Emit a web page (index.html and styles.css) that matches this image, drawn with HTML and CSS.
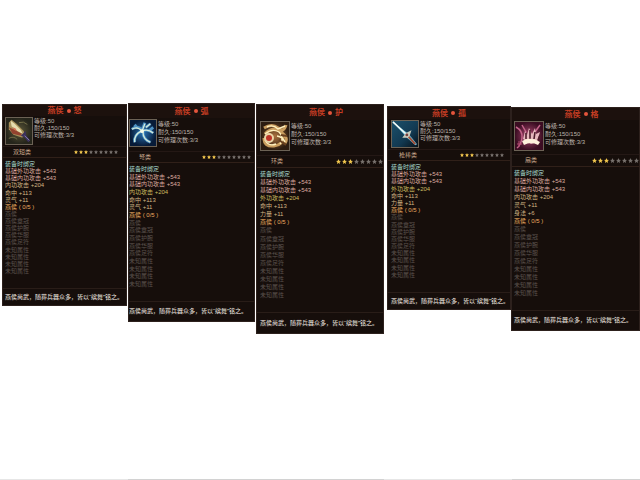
FILE: index.html
```
<!DOCTYPE html>
<html lang="zh-CN">
<head>
<meta charset="utf-8">
<meta name="viewport" content="width=device-width, initial-scale=1">
<title>燕侯武器</title>
<link rel="stylesheet" href="styles.css">
</head>
<body>
<main class="cards" id="cards"></main>
<footer class="base"><i></i><i></i><i></i><i></i><i></i></footer>

<svg width="0" height="0" class="defs" aria-hidden="true">
  <defs>
    <radialGradient id="gA"><stop offset="0" stop-color="#5d5839"/><stop offset="1" stop-color="#25251b"/></radialGradient>
    <radialGradient id="gB"><stop offset="0" stop-color="#2873b4"/><stop offset="1" stop-color="#071b38"/></radialGradient>
    <radialGradient id="gC"><stop offset="0" stop-color="#a9713e"/><stop offset="1" stop-color="#2c1c10"/></radialGradient>
    <linearGradient id="gD" x2="1" y2="1"><stop offset="0" stop-color="#1b506b"/><stop offset=".6" stop-color="#123951"/><stop offset="1" stop-color="#071018"/></linearGradient>
    <radialGradient id="gE"><stop offset="0" stop-color="#b04a74"/><stop offset="1" stop-color="#3b0d22"/></radialGradient>
  </defs>
  <symbol id="blade" viewBox="0 0 28 28">
    <rect width="28" height="28" fill="url(#gA)"/>
    <path d="M3 5 6 2l5 4 8 8 2 6-4 1-9-3-5-6z" fill="#a8925a"/>
    <path d="M5 3 9 6l7 7 2 4-6-3-6-5z" fill="#e6dcae"/>
    <path d="m3 10 5 2 9 5-1 2-9-2z" fill="#93432f"/>
    <path d="m7 10 3 1 2 3-3-1z" fill="#d66f55"/>
    <path d="m16 19 5-5 1 5 4 5-2 2-4-5z" fill="#3b315b"/>
    <path d="m20 19 5 5" stroke="#8b82b4"/>
    <path d="M3 22q5-3 9 1M14 5q5-2 9 2" stroke="#77714a" fill="none"/>
  </symbol>
  <symbol id="claw" viewBox="0 0 28 28">
    <rect width="28" height="28" fill="url(#gB)"/>
    <path d="M2 10q6-5 11 1l3-8M13 12q6-3 12 2M12 12q-8 4-7 12M14 13q0 8 8 11M17 8l5-4M8 9 5 5M20 12l5-4" fill="none" stroke="#4e93c4" stroke-width="3"/>
    <path d="M2 10q6-4 11 2l3-8M13 12q6-3 12 2M12 12q-8 4-7 12M14 13q0 8 8 11M17 8l5-4" fill="none" stroke="#d9edda" stroke-width="1.3"/>
    <circle cx="13" cy="12" r="2" fill="#f5fbe9"/>
  </symbol>
  <symbol id="ring" viewBox="0 0 28 28">
    <rect width="28" height="28" fill="url(#gC)"/>
    <path d="M3 6q8-5 14 0t8-3M4 12q8-8 16-2t4 11M3 16q0 9 10 8 9-1 9-9" fill="none" stroke="#c99d5e" stroke-width="3"/>
    <path d="M6 5q6-3 11 2l7-3M4 12q7-6 14-2 6 6 1 12M4 18q4 7 11 4M16 14q6 1 8 6" fill="none" stroke="#fff0bf" stroke-width="1.4"/>
    <circle cx="8" cy="16" r="5" fill="#ead4a5"/><circle cx="8" cy="16" r="3" fill="#bd3427"/>
    <path d="m18 18 7 5M20 13l6 1" stroke="#68401f" stroke-width="2"/>
  </symbol>
  <symbol id="sword" viewBox="0 0 28 28">
    <rect width="28" height="28" fill="url(#gD)"/>
    <path d="m1 1 17 13 9 11-2 1-10-9z" fill="#69b6d4"/>
    <path d="m1 1 14 13 2 3" fill="none" stroke="#f2fbf7" stroke-width="1.8"/>
    <path d="m11 18 4-5 6-3-2 6 1 4-4-2z" fill="#c7c9bb"/>
    <path d="m18 17 7 8" stroke="#a34e35" stroke-width="2"/>
    <circle cx="16" cy="15" r="1.5" fill="#773f3d"/>
  </symbol>
  <symbol id="fan" viewBox="0 0 28 28">
    <rect width="28" height="28" fill="url(#gE)"/>
    <path d="M1 5q7 4 6 11T2 26M7 3l4 7M25 3l-5 7" fill="none" stroke="#c4638a" stroke-width="1.5"/>
    <path d="m8 17 2-8 2 4 2-7 3 6 3-6 1 6 4-2-3 10-6 2z" fill="#e6b7be"/>
    <path d="m11 17v-6m4 6V8m4 9 1-7m3 8 2-5" stroke="#4b1c2b" stroke-width="1.6"/>
    <path d="M7 19q9-5 18 1l-2 3q-7-4-14 0z" fill="#fff0dc"/>
    <path d="M2 22h5M4 19v6" stroke="#b24a70"/>
  </symbol>
  <symbol id="star" viewBox="0 0 10 10"><path d="m5 0 1.4 3.4L10 3.8 7.3 6.2 8.1 10 5 8 1.9 10l.8-3.8L0 3.8l3.6-.4z"/></symbol>
</svg>
<script src="app.js"></script>
</body>
</html>
```
FILE: styles.css
```
* { box-sizing: border-box; }
body {
  margin: 0;
  min-height: 100vh;
  display: flex;
  flex-direction: column;
  background: #fff;
  font: 6px/7px "Liberation Sans", "Noto Sans CJK SC", sans-serif;
}
h2, p, ul { margin: 0; padding: 0; font: inherit; }
ul { list-style: none; }
.defs { position: absolute; }
.cards {
  flex: 1;
  display: grid;
  grid-template-columns: 127fr 128fr 129fr 127fr 129fr;
  align-items: start;
  padding-top: 103px;
}
.card {
  display: grid;
  min-width: 0;
  overflow: hidden;
  background: #160e0b;
  border: 1px solid #2d211d;
  white-space: nowrap;
}
.blade { margin: 1px 0 0 2px; grid-template-rows: 11px 30px 12px 130px 17px; }
.claw { margin: 0 0 0 1px; grid-template-rows: 14px 33px 12px 138px 20px; }
.ring { margin: 1px 0 0 1px; grid-template-rows: 15px 35px 13px 144px 21px; }
.sword { margin: 3px 0 0 3px; grid-template-rows: 12px 30px 12px 131px 17px; }
.fan { margin: 4px 0 0 0; grid-template-rows: 12px 34px 13px 143px 20px; }
.card > * { padding-left: 2px; }
.claw > * { padding-left: 0; }
.ring > *, .sword > * { padding-left: 3px; }
.card > .title {
  display: flex;
  align-items: center;
  justify-content: center;
  gap: 3px;
  padding: 0;
  background: #1c110d;
  color: #c83e24;
  font-size: 8px;
  font-weight: bold;
  line-height: 9px;
}
.ring > .title, .fan > .title { padding-left: 12px; }
.title i { width: 4px; height: 4px; border-radius: 50%; background: #e4553c; }
.head { display: flex; gap: 1px; padding-top: 1px; align-items: start; }
.icon { width: 28px; height: 28px; border: 1px solid #6c6255; }
.ring .icon, .fan .icon { width: 30px; height: 30px; }
.info { color: #bdb4ab; padding-top: 1px; }
.claw .info, .ring .info, .fan .info { line-height: 8px; }
.kind {
  display: flex;
  align-items: center;
  justify-content: space-between;
  border-top: 1px solid #241815;
  border-bottom: 1px solid #302019;
  padding-right: 8px;
  color: #c9a88c;
}
.kind span { margin-left: 8px; }
.claw .kind { padding-right: 3px; }
.claw .kind span { margin-left: 10px; }
.ring .kind { padding-right: 0; }
.ring .kind span, .fan .kind span { margin-left: 11px; }
.sword .kind { padding-right: 6px; }
.fan .kind { padding-right: 0; }
.stars { display: flex; gap: 1px; }
.stars svg { width: 4px; height: 4px; fill: #77716d; }
.ring .stars svg, .fan .stars svg { width: 5px; height: 5px; }
.stars .on { fill: #f0c64e; }
.attrs {
  display: flex;
  flex-direction: column;
  justify-content: space-between;
  padding-top: 3px;
  padding-bottom: 13px;
  color: #5a514b;
}
.bind { color: #a9dccf; }
.base-stat { color: #dcab9f; }
.extra { color: #d2b584; }
.plus { color: #cdbc60; }
.set { color: #eaab60; }
.note {
  display: flex;
  align-items: center;
  border-top: 1px solid #291d18;
  color: #f4ece4;
}
.base { display: grid; grid-template-columns: repeat(5, 1fr); height: 1px; background: #d2d2d2; }
.base i:first-child, .base i:nth-child(4) { background: #e6e6e6; }
```
FILE: app.js
```
const weapons = [
  { id: "blade", name: "怒", kind: "双短类", stars: 9, power: "内功攻击", tone: "extra", stats: ["命中 +113", "灵气 +11"] },
  { id: "claw", name: "弧", kind: "弩类", stars: 10, power: "内功攻击", tone: "plus", stats: ["命中 +113", "灵气 +11"] },
  { id: "ring", name: "护", kind: "环类", stars: 8, power: "外功攻击", tone: "plus", stats: ["命中 +113", "力量 +11"] },
  { id: "sword", name: "孤", kind: "枪棒类", stars: 9, power: "外功攻击", tone: "plus", stats: ["命中 +113", "力量 +11"] },
  { id: "fan", name: "格", kind: "扇类", stars: 8, power: "内功攻击", tone: "extra", stats: ["灵气 +11", "身法 +6"] }
];
const locked = ["燕侯", "燕侯章冠", "燕侯护腕", "燕侯华服", "燕侯足符", "未知属性", "未知属性", "未知属性", "未知属性"];
const row = (text, tone = "") => `<li class="${tone}">${text}</li>`;
const stars = count => Array.from({ length: count }, (_, i) =>
  `<svg class="${i < 3 ? "on" : ""}"><use href="#star"/></svg>`).join("");

document.getElementById("cards").innerHTML = weapons.map(w => `
  <article class="card ${w.id}">
    <h2 class="title">燕侯<i></i>${w.name}</h2>
    <div class="head">
      <svg class="icon"><use href="#${w.id}"/></svg>
      <div class="info"><p>等级:50</p><p>耐久:150/150</p><p>可修理次数:3/3</p></div>
    </div>
    <div class="kind"><span>${w.kind}</span><div class="stars">${stars(w.stars)}</div></div>
    <ul class="attrs">
      ${row("装备时绑定", "bind")}
      ${row("基础外功攻击 +543", "base-stat")}
      ${row("基础内功攻击 +543", "base-stat")}
      ${row(w.power + " +204", w.tone)}
      ${w.stats.map(s => row(s, "extra")).join("")}
      ${row("燕侯 ( 0/5 )", "set")}
      ${locked.map(s => row(s)).join("")}
    </ul>
    <p class="note">燕侯尚武，随葬兵器众多，皆以“缤舞”铭之。</p>
  </article>`).join("");
```
